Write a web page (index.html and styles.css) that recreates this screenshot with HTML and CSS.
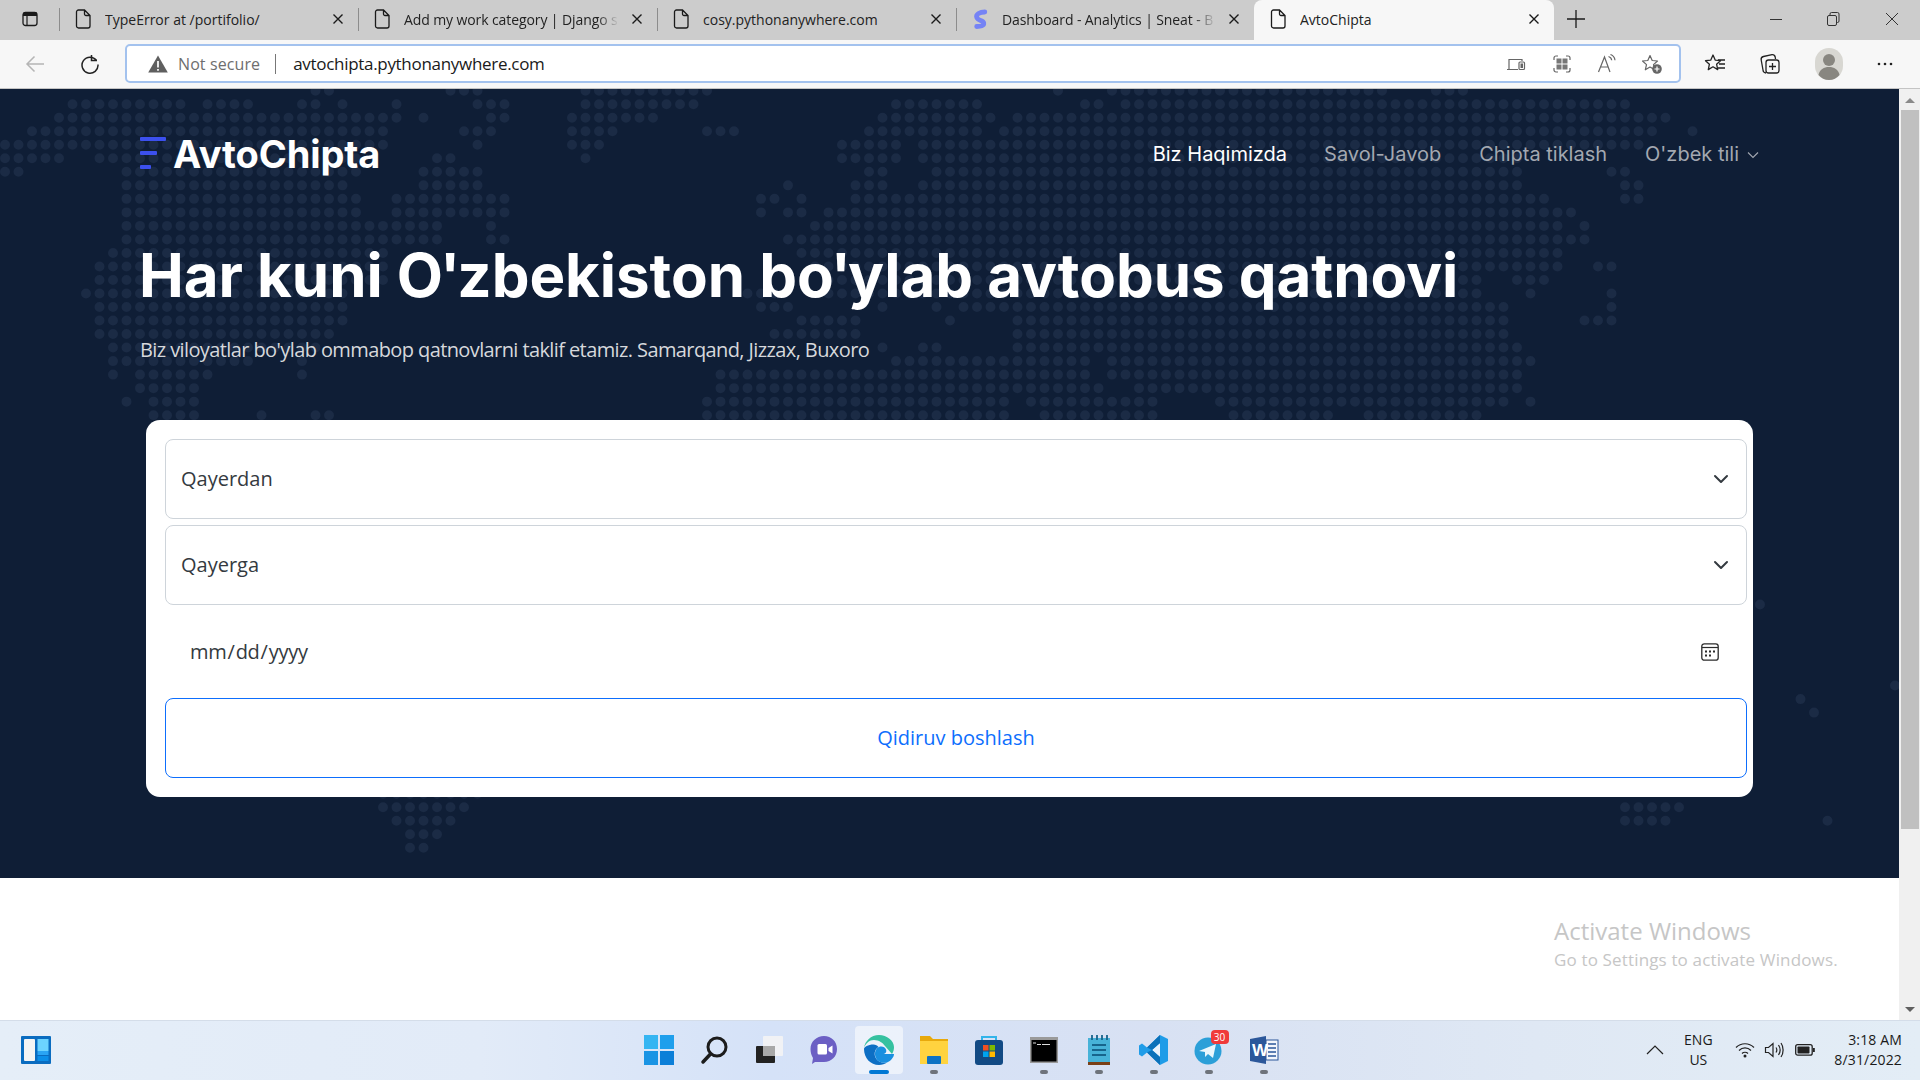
FILE: index.html
```html
<!DOCTYPE html>
<html lang="uz">
<head>
<meta charset="utf-8">
<title>AvtoChipta</title>
<link rel="stylesheet" href="styles.css">
</head>
<body>
<svg class="defs" width="0" height="0" aria-hidden="true">
  <symbol id="i-page" viewBox="0 0 16 20"><path d="M3.5 1h6L15 6.5V17a2 2 0 0 1-2 2H3.500a2 2 0 0 1-2-2V3a2 2 0 0 1 2-2zM9.500 1v4a1.500 1.500 0 0 0 1.500 1.500h4" fill="none" stroke="currentColor" stroke-width="1.300"/></symbol>
  <symbol id="i-x" viewBox="0 0 12 12"><path d="M1.500 1.500l9 9M10.500 1.500l-9 9" fill="none" stroke="currentColor" stroke-width="1.400"/></symbol>
  <symbol id="i-chev" viewBox="0 0 16 16"><path d="M2 5l6 6 6-6" fill="none" stroke="#343a40" stroke-width="2" stroke-linecap="round" stroke-linejoin="round"/></symbol>
</svg>

<header class="tabbar">
  <div class="tab-actions">
    <svg class="ic-16" viewBox="0 0 16 16"><rect x="1" y="1.500" width="14" height="13" rx="2.500" fill="none" stroke="#1a1a1a" stroke-width="1.300"/><path d="M1 2.500a1.500 1.500 0 0 1 1.500-1.500h11a1.500 1.500 0 0 1 1.500 1.500V5H1z" fill="#1a1a1a"/><path d="M5 5v9.500" stroke="#1a1a1a" stroke-width="1.200"/></svg>
  </div>
  <div class="tab">
    <svg class="tab-icon"><use href="#i-page"/></svg>
    <span class="tab-title">TypeError at /portifolio/</span>
    <svg class="tab-close"><use href="#i-x"/></svg>
  </div>
  <div class="tab">
    <svg class="tab-icon"><use href="#i-page"/></svg>
    <span class="tab-title tab-fade">Add my work category | Django s</span>
    <svg class="tab-close"><use href="#i-x"/></svg>
  </div>
  <div class="tab">
    <svg class="tab-icon"><use href="#i-page"/></svg>
    <span class="tab-title">cosy.pythonanywhere.com</span>
    <svg class="tab-close"><use href="#i-x"/></svg>
  </div>
  <div class="tab tab-last">
    <svg class="tab-icon" viewBox="0 0 16 20"><path d="M12.800 3C8 3 3.600 5 4.800 8.500s6.400 2.500 6.900 5.500-3.200 3.500-7 3.500" fill="none" stroke="#7583f5" stroke-width="4.800" stroke-linecap="round"/></svg>
    <span class="tab-title tab-fade">Dashboard - Analytics | Sneat - B</span>
    <svg class="tab-close"><use href="#i-x"/></svg>
  </div>
  <div class="tab tab-active">
    <svg class="tab-icon"><use href="#i-page"/></svg>
    <span class="tab-title">AvtoChipta</span>
    <svg class="tab-close"><use href="#i-x"/></svg>
  </div>
  <svg class="new-tab" viewBox="0 0 18 18"><path d="M9 0v18M0 9h18" stroke="#1a1a1a" stroke-width="1.300"/></svg>
  <div class="win-controls">
    <svg class="ic-16" viewBox="0 0 16 16"><path d="M2 8.500h12" stroke="#333" stroke-width="1"/></svg>
    <svg class="ic-16" viewBox="0 0 16 16"><rect x="2.500" y="4.500" width="9" height="10" rx="1.500" fill="none" stroke="#333"/><path d="M5 4.500V3a1.500 1.500 0 0 1 1.500-1.500h6A1.500 1.500 0 0 1 14 3v7a1.500 1.500 0 0 1-1.500 1.500h-1" fill="none" stroke="#333"/></svg>
    <svg class="ic-16" viewBox="0 0 16 16"><path d="M2 2l12 12M14 2L2 14" stroke="#333" stroke-width="1"/></svg>
  </div>
</header>

<div class="toolbar">
  <svg class="tool tool-back" viewBox="0 0 20 20"><path d="M19 10H2M9.500 2.500L2 10l7.500 7.500" fill="none" stroke="#b5b5b5" stroke-width="1.500"/></svg>
  <svg class="tool tool-reload" viewBox="0 0 20 20"><path d="M16.500 6.500A8 8 0 1 0 18 10.500" fill="none" stroke="#222" stroke-width="1.500"/><path d="M11.500 1v5.500H17" fill="none" stroke="#222" stroke-width="1.500"/></svg>
  <div class="address">
    <svg class="warn" viewBox="0 0 20 18"><path d="M10 .5L19.800 17.500H.2z" fill="#5f5f5f"/><path d="M10 6v6.500M10 14v1.800" stroke="#fff" stroke-width="1.700"/></svg>
    <span class="not-secure">Not secure</span>
    <span class="addr-sep"></span>
    <span class="url">avtochipta.pythonanywhere.com</span>
    <div class="addr-icons">
      <svg class="ic-20" viewBox="0 0 20 20"><path d="M1 15.500h11M3 15V5.500h13V7" fill="none" stroke="#666" stroke-width="1.200"/><rect x="13" y="8" width="5.500" height="7.500" rx="1" fill="none" stroke="#666" stroke-width="1.200"/><rect x="14.500" y="9.500" width="2.500" height="4.500" fill="#666"/></svg>
      <svg class="ic-20" viewBox="0 0 20 20"><path d="M2 6V4a2 2 0 0 1 2-2h2M14 2h2a2 2 0 0 1 2 2v2M18 14v2a2 2 0 0 1-2 2h-2M6 18H4a2 2 0 0 1-2-2v-2" fill="none" stroke="#666" stroke-width="1.200"/><path d="M4.500 4.500h5v5h-5zM10.500 4.500h5v5h-5zM4.500 10.500h5v5h-5zM10.500 10.500h5v5h-5z" fill="#777"/></svg>
      <svg class="ic-20" viewBox="0 0 20 20"><path d="M1.500 18L7.500 3l5.500 15M3.800 13h7.500" fill="none" stroke="#666" stroke-width="1.200"/><path d="M11.500 2.500c2 .6 3 2 3.200 3.800M13.500 0.500c2.600 1 4.200 3 4.500 5.700" fill="none" stroke="#666" stroke-width="1.200"/></svg>
      <svg class="ic-20" viewBox="0 0 20 20"><path d="M8 1.500l2.200 5 5.300.5-4 3.600 1.200 5.200L8 13.100l-4.700 2.700 1.200-5.200-4-3.600 5.300-.5z" fill="none" stroke="#666" stroke-width="1.200" stroke-linejoin="round"/><circle cx="15" cy="15" r="4.800" fill="#666"/><path d="M15 12.500v5M12.500 15h5" stroke="#fff" stroke-width="1.200"/></svg>
    </div>
  </div>
  <div class="tool-right">
    <svg class="ic-22" viewBox="0 0 22 22"><path d="M9 2l2.300 5.200 5.200.5-3.900 3.500 1.100 5.400L9 13.800l-4.700 2.800 1.100-5.400-3.900-3.500 5.200-.5z" fill="none" stroke="#222" stroke-width="1.300" stroke-linejoin="round"/><path d="M14 7h7M15 11h6M14 15h7" stroke="#222" stroke-width="1.300"/></svg>
    <svg class="ic-22" viewBox="0 0 22 22"><path d="M7 20a3 3 0 0 1-3-3L2.200 7a3 3 0 0 1 2.300-3.500l8.500-1.800A3 3 0 0 1 16.200 4l.3 2" fill="none" stroke="#222" stroke-width="1.300"/><rect x="7" y="7" width="13" height="13" rx="2.500" fill="#f7f7f7" stroke="#222" stroke-width="1.300"/><path d="M13.500 10v7M10 13.500h7" stroke="#222" stroke-width="1.300"/></svg>
    <span class="avatar">
      <svg viewBox="0 0 28 32"><rect width="28" height="32" rx="14" fill="#d8d7d2"/><circle cx="14" cy="12" r="6" fill="#888680"/><path d="M3.500 27c1-5.500 5.500-8 10.500-8s9.500 2.500 10.500 8c-2.500 3-6.500 5-10.500 5s-8-2-10.500-5z" fill="#888680"/></svg>
    </span>
    <svg class="ic-22" viewBox="0 0 22 22"><circle cx="5" cy="11" r="1.300" fill="#222"/><circle cx="11" cy="11" r="1.300" fill="#222"/><circle cx="17" cy="11" r="1.300" fill="#222"/></svg>
  </div>
</div>

<div class="viewport">
  <main class="page">
    <section class="hero">
      <svg class="map" viewBox="0 0 1899 789" aria-hidden="true">
        <path transform="translate(5 1.700) scale(13.500 13.520)" fill="none" stroke="#1b2b45" stroke-width=".74" stroke-linecap="round" stroke-dasharray="0 1"
        d="M23 0H24.010M33 0H35.010M43 0H52.010M78 0h.01M82 0H102.010M106 0H108.010
        M5 1H13.010M15 1H18.010M22 1H23.010M25 1h.01M29 1h.01M35 1H37.010M43 1H51.010M66 1H72.010M80 1H81.010M83 1H120.010
        M4 2H29.010M31 2h.01M36 2H37.010M42 2H48.010M65 2H73.010M75 2H123.010
        M2 3H28.010M34 3H36.010M42 3H45.010M52 3H54.010M64 3H72.010M74 3H122.010M125 3h.01
        M0 4H28.010M35 4h.01M42 4H44.010M62 4H66.010M68 4H121.010
        M0 5H4.010M7 5H26.010M32 5H33.010M43 5h.01M62 5H66.010M68 5H112.010
        M0 6H1.010M9 6H26.010M31 6H35.010M64 6H65.010M69 6H112.010M119 6H120.010
        M9 7H25.010M31 7H35.010M58 7h.01M63 7H65.010M68 7H112.010M120 7H121.010
        M9 8H26.010M29 8H37.010M56 8H57.010M59 8h.01M63 8H114.010M120 8H121.010
        M9 9H26.010M29 9H37.010M56 9h.01M58 9H59.010M61 9H116.010
        M9 10H32.010M36 10h.01M60 10H115.010M117 10h.01
        M9 11H32.010M36 11H37.010M58 11H117.010
        M8 12H28.010M59 12H115.010
        M7 13H28.010M60 13H115.010M118 13H119.010
        M7 14H28.010M61 14H109.010M112 14H114.010
        M6 15H25.010M55 15H57.010M61 15H109.010M113 15h.01M119 15h.01
        M7 16H25.010M56 16H58.010M65 16h.01M69 16h.01M71 16H111.010M119 16h.01
        M7 17H25.010M59 17H63.010M70 17h.01M75 17H111.010M117 17H119.010
        M7 18H24.010M57 18H63.010M75 18H111.010
        M8 19H23.010M65 19h.01M68 19H69.010M75 19H112.010
        M8 20H18.010M22 20h.01M66 20H80.010M82 20H113.010
        M8 21h.01M10 21H15.010M22 21h.01M53 21H80.010M82 21H112.010
        M10 22H14.010M53 22H81.010M84 22H112.010
        M9 23h.01M11 23H14.010M52 23H74.010M76 23H85.010M90 23H111.010M113 23h.01
        M11 24H14.010M19 24h.01M23 24H24.010M52 24H74.010M77 24H85.010M91 24H98.010M101 24H109.010
        M130 38h.01M140 44h.01M133 45h.01M134 46h.01
        M28 52H35.010M28 53H34.010M120 53H124.010M29 54H33.010M120 54H123.010M135 54h.01M30 55H32.010M30 56H31.010"/>
      </svg>
      <div class="hero-inner">
        <nav class="navbar">
          <a class="brand">
            <span class="brand-mark"><i class="bar bar-1"></i><i class="bar bar-2"></i><i class="bar bar-3"></i></span>
            <span class="brand-name">AvtoChipta</span>
          </a>
          <ul class="menu">
            <li class="menu-item menu-active">Biz Haqimizda</li>
            <li class="menu-item">Savol-Javob</li>
            <li class="menu-item">Chipta tiklash</li>
            <li class="menu-item menu-lang">O'zbek tili
              <svg class="lang-chev" viewBox="0 0 12 12"><path d="M1 3.500l5 5 5-5" fill="none" stroke="#a3a8b1" stroke-width="1.100"/></svg>
            </li>
          </ul>
        </nav>
        <h1 class="title">Har kuni O<span class="apos">'</span>zbekiston bo<span class="apos">'</span>ylab avtobus qatnovi</h1>
        <p class="lead">Biz viloyatlar bo'ylab ommabop qatnovlarni taklif etamiz. Samarqand, Jizzax, Buxoro</p>
        <form class="search">
          <div class="field"><span>Qayerdan</span><svg class="field-chev"><use href="#i-chev"/></svg></div>
          <div class="field"><span>Qayerga</span><svg class="field-chev"><use href="#i-chev"/></svg></div>
          <div class="date-row">
            <input class="date" type="date">
            <svg class="date-ic" viewBox="0 0 18 18"><rect x=".8" y=".8" width="16.400" height="16.400" rx="2.500" fill="none" stroke="#2b2b2b" stroke-width="1.300"/><path d="M1 4.500h16" stroke="#2b2b2b" stroke-width="1.200"/><path d="M4 7.500h2v2H4zM8 7.500h2v2H8zM12 7.500h2v2h-2zM4 11.500h2v2H4zM8 11.500h2v2H8z" fill="#2b2b2b"/></svg>
          </div>
          <button class="submit" type="button">Qidiruv boshlash</button>
        </form>
      </div>
    </section>
  </main>
  <aside class="scrollbar">
    <i class="sb-up"></i>
    <div class="sb-track"><div class="sb-thumb"></div></div>
    <i class="sb-down"></i>
  </aside>
</div>

<div class="activate">
  <div class="activate-title">Activate Windows</div>
  <div class="activate-sub">Go to Settings to activate Windows.</div>
</div>

<footer class="taskbar">
  <div class="widgets">
    <svg class="widget-icon" viewBox="0 0 30 28"><rect width="30" height="28" rx="1" fill="#0a6cc0"/><rect x="3" y="3" width="11" height="22" rx="1" fill="#f4f4f4"/><rect x="16.500" y="3" width="11" height="12" fill="#6cd3ff"/><rect x="16.500" y="15" width="11" height="4" fill="#2aa4f4"/><rect x="16.500" y="20" width="11" height="5" fill="#0c8ee8"/></svg>
  </div>
  <div class="apps">
    <div class="app"><div class="tile">
      <svg class="app-ic" viewBox="0 0 30 30"><rect x="0" y="0" width="14" height="14" fill="#35b5f2"/><rect x="16" y="0" width="14" height="14" fill="#1f9fec"/><rect x="0" y="16" width="14" height="14" fill="#1a94e4"/><rect x="16" y="16" width="14" height="14" fill="#0c7fd8"/></svg>
    </div></div>
    <div class="app"><div class="tile">
      <svg class="app-ic" viewBox="0 0 30 30"><circle cx="18" cy="12" r="9" fill="none" stroke="#1c1c1c" stroke-width="3"/><path d="M11.500 19L4 27" stroke="#1c1c1c" stroke-width="3.500" stroke-linecap="round"/></svg>
    </div></div>
    <div class="app"><div class="tile">
      <svg class="app-ic" viewBox="0 0 30 30"><rect x="2" y="11" width="19" height="17" rx="1" fill="#222"/><rect x="9" y="1" width="20" height="20" rx="1" fill="#f4f4f4" opacity=".9"/><rect x="9" y="11" width="12" height="10" fill="#a8a8a8"/></svg>
    </div></div>
    <div class="app"><div class="tile">
      <svg class="app-ic" viewBox="0 0 30 30"><path d="M15 1c7.500 0 13 5.500 13 13s-5.500 13-13 13H6l-3 2 1-6C2.500 20.500 1.500 17.500 1.500 14 1.500 6.500 7.500 1 15 1z" fill="#6b5fc4"/><rect x="8.500" y="9" width="9.500" height="10.500" rx="1.500" fill="#fff"/><path d="M19.500 13l4-2.500v8l-4-2.500z" fill="#fff"/></svg>
    </div></div>
    <div class="app app-active"><div class="tile tile-active">
      <svg class="app-ic" viewBox="0 0 30 30"><path d="M15 0C7 0 .8 6.200 0 13c1-3 4-8 10-8 5 0 9 3 11 6l7 8c1.500-2 2-5 2-7C30 6 23 0 15 0z" fill="#35c1a0"/><path d="M0 14c0 9 6.500 16 15 16 3 0 6-1 8-2.500-4 1-9.500-.5-11.500-5-2-4.500 0-9 3-10.500-1-1.500-3-2.500-5-2.500C4 9.500 0 12 0 14z" fill="#0d6fc4"/><path d="M15 12c3-1 6 0 7 2.500s-.5 4.500-3.500 4.500H30c0 3-3 7-7 8.500-5 1-10-1-11.500-5.500S12 13 15 12z" fill="#1a8fe0"/></svg>
      <i class="run run-active"></i>
    </div></div>
    <div class="app"><div class="tile">
      <svg class="app-ic" viewBox="0 0 30 30"><path d="M1 1h10l3 3h15v23H1z" fill="#e8a90c"/><rect x="1" y="6" width="28" height="23" fill="#ffd33f"/><rect x="8" y="21" width="14" height="8" rx="1" fill="#0d72c4"/></svg>
      <i class="run"></i>
    </div></div>
    <div class="app"><div class="tile">
      <svg class="app-ic" viewBox="0 0 30 30"><path d="M8 5V2h14v3" fill="none" stroke="#32b4ea" stroke-width="2"/><rect x="1" y="5" width="28" height="25" rx="3" fill="#124a84"/><rect x="9" y="10" width="5.500" height="5.500" fill="#f25022"/><rect x="15.500" y="10" width="5.500" height="5.500" fill="#7fba00"/><rect x="9" y="16.500" width="5.500" height="5.500" fill="#00a4ef"/><rect x="15.500" y="16.500" width="5.500" height="5.500" fill="#ffb900"/></svg>
    </div></div>
    <div class="app"><div class="tile">
      <svg class="app-ic" viewBox="0 0 30 30"><rect x="1" y="2" width="28" height="26" fill="#9a9a9a"/><rect x="2.500" y="5" width="25" height="21.500" fill="#000"/><path d="M4 8h3M8 9.500h4M13 9.500h8" stroke="#ddd" stroke-width="1.200"/></svg>
      <i class="run"></i>
    </div></div>
    <div class="app"><div class="tile">
      <svg class="app-ic" viewBox="0 0 30 30"><rect x="4" y="3" width="22" height="27" fill="#47b2d8"/><rect x="4" y="27" width="22" height="3" fill="#7a4018"/><path d="M8 10h14M8 15h14M8 20h14" stroke="#17648c" stroke-width="1.800"/><path d="M8 0v5M13 0v5M18 0v5M23 0v5" stroke="#17648c" stroke-width="1.800"/></svg>
      <i class="run"></i>
    </div></div>
    <div class="app"><div class="tile">
      <svg class="app-ic" viewBox="0 0 30 30"><path d="M21 0l8 4v22l-8 4-13-12.500-5 4-3-2V10.500l3-2 5 4z" fill="#1f9ce8"/><path d="M21 8l-8 7 8 7z" fill="#e8f2fb"/><path d="M21 0v30L8 17.500l5-2.500 8 7V8l-8 7-5-2.500z" fill="#0b71b9"/></svg>
      <i class="run"></i>
    </div></div>
    <div class="app"><div class="tile">
      <svg class="app-ic" viewBox="0 0 30 30"><circle cx="14" cy="16" r="13.500" fill="#2b9fd8"/><path d="M5 16l17-7-3 14-5-4-3 3v-5z" fill="#e9f6fc"/></svg>
      <span class="badge">30</span>
      <i class="run"></i>
    </div></div>
    <div class="app"><div class="tile">
      <svg class="app-ic" viewBox="0 0 30 30"><path d="M17 1v28L1 26V4z" fill="#2b579a"/><rect x="17" y="5" width="12" height="20" fill="#f3f6fb" stroke="#2b579a"/><path d="M19 9h8M19 13h8M19 17h8M19 21h8" stroke="#2b579a" stroke-width="1.500"/><text class="word-w" x="3" y="21">W</text></svg>
      <i class="run"></i>
    </div></div>
  </div>
  <div class="tray">
    <svg class="tray-chev" viewBox="0 0 18 10"><path d="M1 9l8-8 8 8" fill="none" stroke="#222" stroke-width="1.200"/></svg>
    <div class="lang"><div>ENG</div><div>US</div></div>
    <div class="tray-icons">
      <svg class="ic-20" viewBox="0 0 20 20"><path d="M1 7.500c5-5 13-5 18 0M4 10.500c3.500-3.500 8.500-3.500 12 0M7 13.500c1.700-1.700 4.300-1.700 6 0" fill="none" stroke="#222" stroke-width="1.200"/><circle cx="10" cy="16" r="1.500" fill="#222"/></svg>
      <svg class="ic-20" viewBox="0 0 20 20"><path d="M1.500 7.500v5h3l4.500 4V3.500l-4.500 4z" fill="none" stroke="#222" stroke-width="1.200"/><path d="M12 7.500c1 1.500 1 3.500 0 5M14.500 5c2 3 2 7 0 10M17 3c2.800 4 2.800 10 0 14" fill="none" stroke="#222" stroke-width="1.200"/></svg>
      <svg class="ic-20 tray-batt" viewBox="0 0 20 20"><rect x="0.700" y="4.700" width="16.500" height="10.500" rx="2" fill="none" stroke="#222" stroke-width="1.300"/><rect x="2.500" y="6.500" width="12" height="7" rx=".8" fill="#222"/><rect x="18" y="8" width="1.800" height="4" fill="#222"/></svg>
    </div>
    <div class="clock"><div>3:18 AM</div><div>8/31/2022</div></div>
  </div>
</footer>
</body>
</html>
```
FILE: styles.css
```css
* { box-sizing: border-box; }
html, body { margin: 0; height: 100%; }
body {
  height: 1080px;
  overflow: hidden;
  display: flex;
  flex-direction: column;
  font-family: "Open Sans", "Noto Sans", sans-serif;
  background: #fff;
  color: #1a1a1a;
  position: relative;
}
.defs { position: absolute; }
.ic-16 { width: 16px; height: 16px; flex: none; }
.ic-20 { width: 20px; height: 20px; flex: none; }
.ic-22 { width: 22px; height: 22px; flex: none; }

/* tab strip */
.tabbar {
  height: 40px;
  flex: none;
  display: flex;
  align-items: stretch;
  background: #cccccc;
}
.tab-actions { width: 59px; display: flex; align-items: center; padding: 0 0 2px 22px; }
.tab {
  width: 299px;
  display: flex;
  align-items: center;
  padding: 0 14px 2px 16px;
  font-size: 14px;
  letter-spacing: 0;
  color: #222;
  position: relative;
}
.tab::before {
  content: "";
  position: absolute;
  left: 0;
  top: 8px;
  bottom: 9px;
  width: 1px;
  background: #8c8c8c;
}
.tab-last { width: 298px; }
.tab-icon { width: 16px; height: 20px; flex: none; margin-right: 14px; color: #1a1a1a; }
.tab-title { flex: 1; white-space: nowrap; overflow: hidden; }
.tab-fade {
  letter-spacing: -.1px;
  -webkit-mask-image: linear-gradient(to left, transparent 0, #000 22px);
  mask-image: linear-gradient(to left, transparent 0, #000 22px);
}
.tab-close { width: 12px; height: 12px; flex: none; margin-left: 12px; color: #1a1a1a; }
.tab-active {
  width: 300px;
  background: #f7f7f7;
  border-radius: 8px 8px 0 0;
}
.tab-active::before { display: none; }
.new-tab { width: 18px; height: 18px; align-self: center; margin: -2px 0 0 13px; flex: none; }
.win-controls {
  margin-left: auto;
  display: flex;
  align-items: center;
  gap: 41px;
  padding: 0 20px 2px 0;
}
.win-controls svg:nth-child(3) { margin-left: 2px; }

/* toolbar */
.toolbar {
  height: 49px;
  flex: none;
  background: #f7f7f7;
  border-bottom: 1px solid #c4c4c4;
  display: flex;
  align-items: center;
  padding: 0 0 1px 25px;
}
.tool { width: 20px; height: 20px; flex: none; }
.tool-reload { margin-left: 35px; }
.address {
  margin-left: 25px;
  width: 1556px;
  height: 39px;
  background: #fff;
  border: 2px solid #a3c2ee;
  border-radius: 5px;
  display: flex;
  align-items: center;
  padding: 0 17px 0 21px;
}
.warn { width: 20px; height: 18px; flex: none; }
.not-secure { margin-left: 10px; font-size: 16px; letter-spacing: .1px; color: #6e6e6e; }
.addr-sep { width: 1px; height: 20px; background: #777; margin: 0 17px 0 15px; }
.url { font-size: 17px; letter-spacing: -.3px; color: #1a1a1a; }
.addr-icons { margin-left: auto; display: flex; gap: 25px; }
.addr-icons svg:first-child { margin-right: 1px; margin-left: -1px; }
.tool-right {
  margin-left: 23px;
  display: flex;
  align-items: center;
}
.tool-right > svg:first-child { margin-right: 33px; }
.tool-right > svg:nth-child(2) { margin-right: 34px; }
.tool-right > svg:last-child { margin-left: 31px; }
.avatar { width: 28px; height: 32px; display: block; }
.avatar svg { display: block; width: 28px; height: 32px; }

/* page area */
.viewport { flex: 1; min-height: 0; display: flex; }
.page { flex: 1; min-width: 0; background: #fff; }
.hero {
  height: 789px;
  background: #0f1e36;
  position: relative;
  overflow: hidden;
}
.map { position: absolute; inset: 0; width: 100%; height: 100%; }
.hero-inner { position: relative; padding: 0 140px; }

.navbar {
  height: 130px;
  display: flex;
  align-items: center;
  justify-content: space-between;
}
.brand { display: flex; align-items: center; gap: 7px; }
.brand-mark { display: flex; flex-direction: column; gap: 10px; width: 26px; margin-top: -2px; }
.bar { display: block; height: 4px; background: #3c50ee; border-radius: 1px; }
.bar-1 { width: 26px; }
.bar-2 { width: 17px; }
.bar-3 { width: 11px; }
.brand-name { font: 700 38px/46px Inter, sans-serif; letter-spacing: -.1px; color: #fff; }
.menu {
  list-style: none;
  margin: 0;
  padding: 0;
  display: flex;
  gap: 38px;
  font: 400 20px/30px Inter, sans-serif;
  color: #a3a8b1;
  letter-spacing: 0;
}
.menu-active { color: #fff; margin-right: -1px; }
.menu-lang { display: flex; align-items: center; gap: 8px; }
.lang-chev { width: 12px; height: 12px; margin-top: 1px; }

.title {
  margin: 0 0 0 -1px;
  font: 700 60px/72px Inter, sans-serif;
  letter-spacing: -.05px;
  color: #fff;
  white-space: nowrap;
  padding-top: 20px;
}
.apos { margin: 0 -3px; }
.lead {
  margin: 24px 0 0;
  font-size: 20px;
  line-height: 30px;
  letter-spacing: -.6px;
  color: #d6d8dc;
}
.search {
  margin: 55px 6px 0;
  background: #fff;
  border-radius: 14px;
  padding: 19px 6px 19px 19px;
  display: flex;
  flex-direction: column;
}
.field {
  height: 80px;
  border: 1px solid #ced4da;
  border-radius: 8px;
  display: flex;
  align-items: center;
  justify-content: space-between;
  padding: 0 17px 2px 15px;
  font-size: 20px;
  color: #343a40;
}
.field + .field { margin-top: 6px; }
.field-chev { width: 16px; height: 16px; flex: none; margin-top: 2px; }
.date-row {
  height: 93px;
  display: flex;
  align-items: center;
  padding: 0 28px 0 24px;
}
.date {
  flex: 1;
  min-width: 0;
  border: 0;
  background: transparent;
  padding: 0;
  font: 400 20px "Open Sans", sans-serif;
  letter-spacing: -.25px;
  color: #343a40;
  outline: 0;
}
.date::-webkit-calendar-picker-indicator { display: none; }
.date-ic { width: 18px; height: 18px; flex: none; }
.submit {
  height: 80px;
  border: 1px solid #0d6efd;
  border-radius: 8px;
  background: #fff;
  color: #0d6efd;
  font: 400 20px "Open Sans", sans-serif;
  padding: 0 0 2px;
  width: 100%;
}

/* scrollbar */
.scrollbar {
  width: 21px;
  flex: none;
  display: flex;
  flex-direction: column;
  align-items: center;
  background: #f0f0f0;
  padding: 0 1px;
}
.sb-up, .sb-down { flex: none; width: 0; height: 0; border-left: 5px solid transparent; border-right: 5px solid transparent; }
.sb-up { border-bottom: 5px solid #8a8a8a; margin-top: 9px; }
.sb-down { border-top: 5px solid #606060; margin-bottom: 8px; }
.sb-track { flex: 1; width: 100%; padding-top: 7px; }
.sb-thumb { height: 719px; width: 18px; margin-left: 1px; background: #c0c0c0; }

/* watermark */
.activate {
  position: absolute;
  left: 1554px;
  top: 915px;
  color: #c6c6c6;
}
.activate-title { font-size: 24px; line-height: 32px; }
.activate-sub { font-size: 17px; line-height: 26px; letter-spacing: .15px; }

/* taskbar */
.taskbar {
  height: 60px;
  flex: none;
  display: flex;
  align-items: center;
  padding-bottom: 2px;
  background: linear-gradient(90deg, #e5eef8 0%, #e2ebf8 25%, #d5e2f8 40%, #d8e1f3 60%, #dfe8f4 80%, #e3edf6 100%);
  border-top: 1px solid #d4dde9;
}
.widgets { width: 631px; flex: none; padding-left: 21px; display: flex; }
.widget-icon { width: 30px; height: 28px; }
.apps { display: flex; align-items: center; }
.app { width: 55px; display: flex; justify-content: center; }
.tile {
  width: 48px;
  height: 48px;
  display: flex;
  align-items: center;
  justify-content: center;
  position: relative;
  border-radius: 4px;
}
.tile-active { background: rgba(255, 255, 255, .55); }
.app-ic { width: 30px; height: 30px; }
.run {
  position: absolute;
  left: 20px;
  bottom: 0;
  width: 8px;
  height: 4px;
  border-radius: 2px;
  background: #6e737b;
}
.run-active { left: 14px; width: 20px; background: #0078d4; }
.badge {
  position: absolute;
  right: 4px;
  top: 4px;
  min-width: 18px;
  height: 14px;
  padding: 0 2px;
  border-radius: 4px;
  background: #f03a3a;
  color: #fff;
  font-size: 10px;
  line-height: 14px;
  text-align: center;
}
.word-w { font: 700 17px "Liberation Sans", sans-serif; fill: #fff; }
.tray {
  margin-left: auto;
  display: flex;
  align-items: center;
  padding-right: 18px;
  font-size: 14px;
  line-height: 20px;
  color: #1a1a1a;
}
.tray-chev { width: 18px; height: 10px; }
.lang { margin-left: 16px; text-align: center; width: 36px; }
.tray-icons { margin-left: 19px; display: flex; gap: 9px; }
.tray-batt { margin-left: 2px; }
.clock { margin-left: 19px; text-align: right; letter-spacing: .15px; }
```
